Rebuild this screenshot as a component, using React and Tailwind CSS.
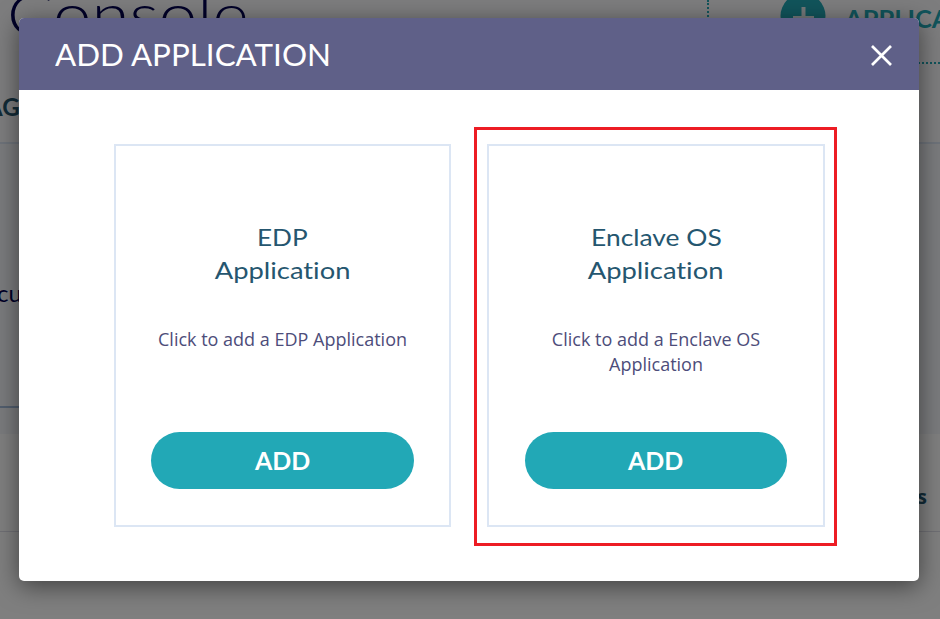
import React from "react";

function Card({ lines, text, className, buttonWidth }) {
  return (
    <section className={`flex h-[383px] flex-col items-center border-2 border-[#dce6f4] pt-[74px] ${className}`}>
      <h2 className="flex flex-col items-center font-['Lato',sans-serif] text-[24px] leading-[33px] font-normal whitespace-nowrap text-[#25566f] [font-variant-ligatures:none]">
        {lines.map(([line, cls]) => (
          <span key={line} className={cls}>{line}</span>
        ))}
      </h2>
      <p className="mt-[41px] h-[50px] w-[264px] text-center font-['Open_Sans',sans-serif] text-[18px] leading-[25px] text-[#4d4d7a]">
        {text}
      </p>
      <button className={`mt-[55px] flex h-[57px] items-center justify-center rounded-full bg-[#22a8b6] font-['Lato',sans-serif] text-[24px] font-bold text-white ${buttonWidth}`}>
        <span className="scale-x-[1.04]">ADD</span>
      </button>
    </section>
  );
}

function Backdrop() {
  return (
    <div className="h-full bg-[#fafbfc] font-['Lato',sans-serif]">
      <header className="flex h-[64px]">
        <div className="w-[707px] pl-[7px]">
          <div className="mt-[-23px] w-max origin-left scale-x-[1.15] text-[60px] leading-[72px] font-light whitespace-nowrap text-[#000050]">
            Console
          </div>
        </div>
        <div className="flex flex-1 overflow-hidden border-b-2 border-l-2 border-dotted border-[#22a8b6] pl-[71px]">
          <svg className="mt-[-7px] shrink-0" width="46" height="46" viewBox="0 0 46 46">
            <circle cx="23" cy="23" r="22.5" fill="#22a8b6" />
            <path d="M23.5 14v20M13 25h21" stroke="#e8f0f2" strokeWidth="4" />
          </svg>
          <span className="mt-[4px] ml-[19px] h-[30px] origin-left scale-x-[1.06] text-[24px] leading-[30px] font-bold whitespace-nowrap text-[#22a8b6]">
            APPLICATION
          </span>
        </div>
      </header>
      <div className="h-[80px] overflow-hidden border-b-2 border-[#dce6f4] pt-[28px]">
        <span className="ml-[-14px] text-[24px] leading-[30px] font-bold text-[#25566f]">AG</span>
      </div>
      <div className="h-[290px] bg-[#f4f7fb]">
        <div className="h-[264px] w-[300px] border-b-2 border-[#a4bddd] pt-[133px]">
          <span className="ml-[-3px] text-[24px] leading-[32px] text-[#000050]">cu</span>
        </div>
      </div>
      <div className="flex h-[98px] items-center justify-end border-b border-[#dfdfe8] bg-white pt-[28px] pr-[13px]">
        <span className="font-['Open_Sans',sans-serif] text-[20px] font-bold text-[#25566f]">s</span>
      </div>
      <div className="h-[87px] bg-white" />
    </div>
  );
}

export default function App() {
  return (
    <main className="relative h-[619px] w-[940px] overflow-hidden">
      <Backdrop />
      <div className="absolute inset-0 bg-black/50 pt-[18px] pl-[19px]">
        <div className="h-[563px] w-[900px] overflow-hidden rounded-[5px] bg-white shadow-[0_5px_25px_rgba(0,0,0,0.5)]">
          <header className="flex h-[72px] items-center justify-between bg-[#5f6088] pr-[26px] pl-[36px]">
            <h1 className="origin-left scale-x-[1.045] font-['Lato',sans-serif] text-[30px] font-normal text-white">
              ADD APPLICATION
            </h1>
            <svg width="23" height="23" viewBox="0 0 23 23" className="mt-[3px]">
              <path d="M2 2l19 19M21 2L2 21" stroke="#fff" strokeWidth="2.7" />
            </svg>
          </header>
          <div className="flex pt-[37px] pl-[95px]">
            <Card
              className="mt-[17px] w-[337px]"
              buttonWidth="w-[263px]"
              lines={[["EDP", "scale-x-[1.09]"], ["Application", "scale-x-[1.14]"]]}
              text="Click to add a EDP Application"
            />
            <div className="ml-[23px] h-[419px] w-[363px] border-[3px] border-[#ed1c24] pt-[14px] pl-[10px]">
              <Card
                className="w-[338px]"
                buttonWidth="w-[262px]"
                lines={[["Enclave OS", "scale-x-[1.1]"], ["Application", "scale-x-[1.14]"]]}
                text="Click to add a Enclave OS Application"
              />
            </div>
          </div>
        </div>
      </div>
    </main>
  );
}
